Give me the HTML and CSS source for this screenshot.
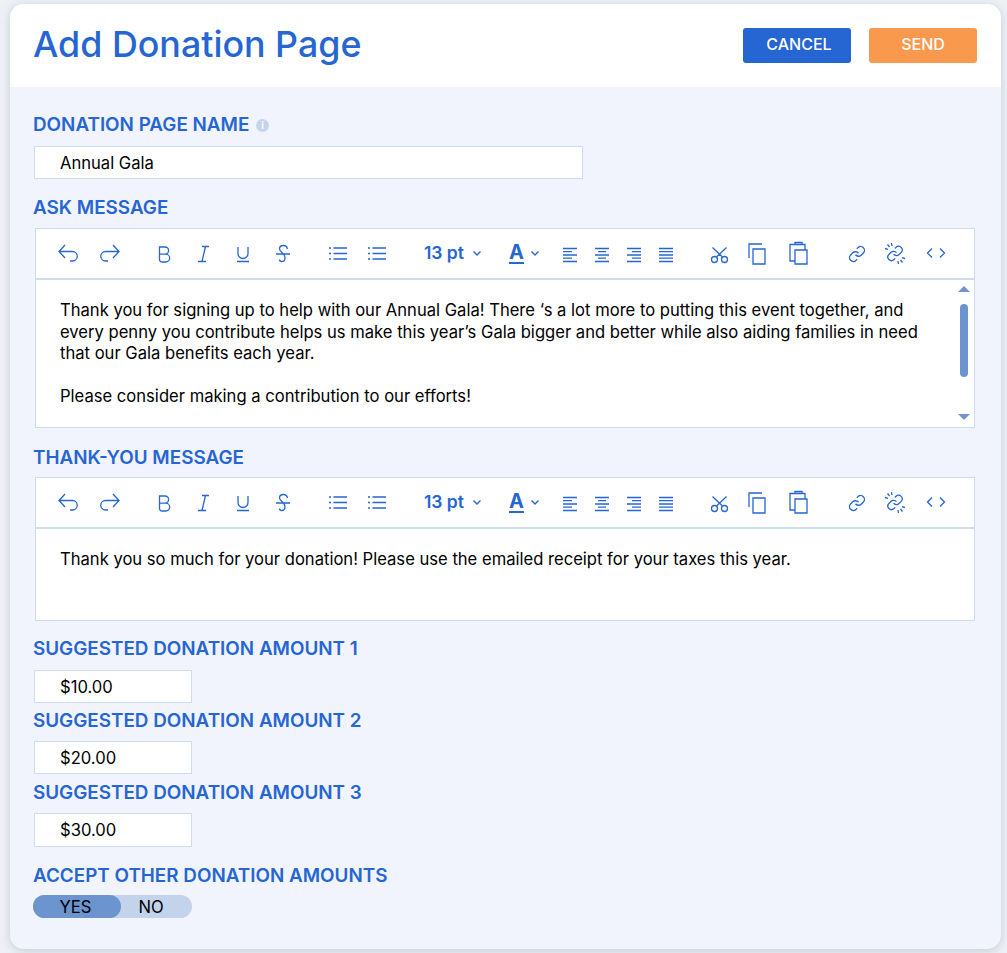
FILE: index.html
```html
<!DOCTYPE html>
<html lang="en">
<head>
  <meta charset="UTF-8" />
  <title>Add Donation Page</title>
  <link rel="stylesheet" href="styles.css">
</head>
<body>
  <svg class="sprite" aria-hidden="true">
    <symbol id="i-undo" viewBox="0 0 24 24"><path d="M9 4 3 10.5 9 17M3 10.5h13.5a4.75 4.75 0 0 1 0 9.5H14"/></symbol>
    <symbol id="i-redo" viewBox="0 0 24 24"><path d="M15 4l6 6.5-6 6.5M21 10.5H7.5a4.75 4.75 0 0 0 0 9.5H10"/></symbol>
    <symbol id="i-bold" viewBox="0 0 24 24"><path d="M7.5 6H13a3.6 3.6 0 0 1 0 7.2H7.5zM7.5 13.2h6.3a3.9 3.9 0 0 1 0 7.8H10a2.5 2.5 0 0 1-2.5-2.5z"/></symbol>
    <symbol id="i-italic" viewBox="0 0 24 24"><path d="M11 5.5h7M7 20.5h8M14.5 5.5 11 20.5"/></symbol>
    <symbol id="i-underline" viewBox="0 0 24 24"><path d="M7 6v6.5a5 5 0 0 0 10 0V6M6 20.5h12"/></symbol>
    <symbol id="i-strike" viewBox="0 0 24 24"><path d="M17.5 8C17 5.5 15.5 4.5 13.5 4.5 11 4.5 9.5 6 9.5 8c0 3 5.5 4.5 5.5 8.5 0 2.5-1.5 4-3 4s-2.5-1-2.5-2M6 13h14"/></symbol>
    <symbol id="i-list" viewBox="0 0 24 24"><path d="M7.5 7H21M7.5 12.5H21M7.5 18H21M3 7h2M3 12.5h2M3 18h2"/></symbol>
    <symbol id="i-chevron" viewBox="0 0 10 10"><path d="M1.5 3.5 5 7l3.5-3.5"/></symbol>
    <symbol id="i-left" viewBox="0 0 24 24"><path d="M5 7.5h14M5 10.7h9M5 14h14M5 17.2h9M5 20.5h14"/></symbol>
    <symbol id="i-center" viewBox="0 0 24 24"><path d="M5 7.5h14M8 10.7h8M5 14h14M8 17.2h8M5 20.5h14"/></symbol>
    <symbol id="i-right" viewBox="0 0 24 24"><path d="M5 7.5h14M10 10.7h9M5 14h14M10 17.2h9M5 20.5h14"/></symbol>
    <symbol id="i-justify" viewBox="0 0 24 24"><path d="M5 7.5h14M5 10.7h14M5 14h14M5 17.2h14M5 20.5h14"/></symbol>
    <symbol id="i-cut" viewBox="0 0 24 24"><circle cx="7.5" cy="18.5" r="3"/><circle cx="17.5" cy="18.5" r="3"/><path d="M9.5 16 19.5 6.5M15.5 16 5.5 6.5"/></symbol>
    <symbol id="i-copy" viewBox="0 0 24 24"><path d="M3 17V3h13M7 8h12v15H7z"/></symbol>
    <symbol id="i-paste" viewBox="0 0 24 24"><path d="M9 20H4V3.5h15V9M9 3.5v-2h7v2M9 9h12v14H9z"/></symbol>
    <symbol id="i-link" viewBox="0 0 24 24"><g class="chain" transform="translate(3 4) scale(.75)"><path d="M10 13a5 5 0 0 0 7.54.54l3-3a5 5 0 0 0-7.07-7.07l-1.72 1.71M14 11a5 5 0 0 0-7.54-.54l-3 3a5 5 0 0 0 7.07 7.07l1.71-1.71"/></g></symbol>
    <symbol id="i-unlink" viewBox="0 0 24 24"><g class="chain" transform="translate(2.4 3.8) scale(.72)"><path d="M10 13a5 5 0 0 0 7.54.54l3-3a5 5 0 0 0-7.07-7.07l-1.72 1.71M14 11a5 5 0 0 0-7.54-.54l-3 3a5 5 0 0 0 7.07 7.07l1.71-1.71"/></g><path d="M1 7.5l3 .8M3.5 3.5l2 2.5M7.5 2l.5 3M21 17.5l-3-.8M18.5 21.5l-2-2.5M14.5 23l-.5-3"/></symbol>
    <symbol id="i-code" viewBox="0 0 24 24"><path d="M8 7.5 3.5 12 8 16.5M16 7.5l4.5 4.5-4.5 4.5"/></symbol>
  </svg>

  <div class="card">
    <header class="card-head">
      <h1>Add Donation Page</h1>
      <div class="actions">
        <button class="btn btn-cancel">CANCEL</button>
        <button class="btn btn-send">SEND</button>
      </div>
    </header>

    <main class="card-body">
      <label class="field-label first">DONATION PAGE NAME <span class="info">i</span></label>
      <div class="input input-wide">Annual Gala</div>

      <label class="field-label ask">ASK MESSAGE</label>
      <div class="editor">
        <div class="toolbar">
          <div class="tools g-history">
            <svg class="ico"><use href="#i-undo"/></svg>
            <svg class="ico"><use href="#i-redo"/></svg>
          </div>
          <div class="tools g-format">
            <svg class="ico"><use href="#i-bold"/></svg>
            <svg class="ico"><use href="#i-italic"/></svg>
            <svg class="ico"><use href="#i-underline"/></svg>
            <svg class="ico"><use href="#i-strike"/></svg>
          </div>
          <div class="tools g-lists">
            <svg class="ico"><use href="#i-list"/></svg>
            <svg class="ico"><use href="#i-list"/></svg>
          </div>
          <div class="size">13 pt <svg class="chev"><use href="#i-chevron"/></svg></div>
          <div class="color"><span class="color-a">A</span><svg class="chev"><use href="#i-chevron"/></svg></div>
          <div class="tools g-align">
            <svg class="ico"><use href="#i-left"/></svg>
            <svg class="ico"><use href="#i-center"/></svg>
            <svg class="ico"><use href="#i-right"/></svg>
            <svg class="ico"><use href="#i-justify"/></svg>
          </div>
          <div class="tools g-clip">
            <svg class="ico"><use href="#i-cut"/></svg>
            <svg class="ico"><use href="#i-copy"/></svg>
            <svg class="ico"><use href="#i-paste"/></svg>
          </div>
          <div class="tools g-link">
            <svg class="ico"><use href="#i-link"/></svg>
            <svg class="ico"><use href="#i-unlink"/></svg>
            <svg class="ico"><use href="#i-code"/></svg>
          </div>
        </div>
        <div class="editor-body ask-body">
          <div class="editor-text">
            <p>Thank you for signing up to help with our Annual Gala! There ‘s a lot more to putting this event together, and every penny you contribute helps us make this year’s Gala bigger and better while also aiding families in need that our Gala benefits each year.</p>
            <p>Please consider making a contribution to our efforts!</p>
          </div>
          <div class="scroller">
            <span class="arrow up"></span>
            <span class="thumb"></span>
            <span class="arrow down"></span>
          </div>
        </div>
      </div>

      <label class="field-label thanks">THANK-YOU MESSAGE</label>
      <div class="editor">
        <div class="toolbar">
          <div class="tools g-history">
            <svg class="ico"><use href="#i-undo"/></svg>
            <svg class="ico"><use href="#i-redo"/></svg>
          </div>
          <div class="tools g-format">
            <svg class="ico"><use href="#i-bold"/></svg>
            <svg class="ico"><use href="#i-italic"/></svg>
            <svg class="ico"><use href="#i-underline"/></svg>
            <svg class="ico"><use href="#i-strike"/></svg>
          </div>
          <div class="tools g-lists">
            <svg class="ico"><use href="#i-list"/></svg>
            <svg class="ico"><use href="#i-list"/></svg>
          </div>
          <div class="size">13 pt <svg class="chev"><use href="#i-chevron"/></svg></div>
          <div class="color"><span class="color-a">A</span><svg class="chev"><use href="#i-chevron"/></svg></div>
          <div class="tools g-align">
            <svg class="ico"><use href="#i-left"/></svg>
            <svg class="ico"><use href="#i-center"/></svg>
            <svg class="ico"><use href="#i-right"/></svg>
            <svg class="ico"><use href="#i-justify"/></svg>
          </div>
          <div class="tools g-clip">
            <svg class="ico"><use href="#i-cut"/></svg>
            <svg class="ico"><use href="#i-copy"/></svg>
            <svg class="ico"><use href="#i-paste"/></svg>
          </div>
          <div class="tools g-link">
            <svg class="ico"><use href="#i-link"/></svg>
            <svg class="ico"><use href="#i-unlink"/></svg>
            <svg class="ico"><use href="#i-code"/></svg>
          </div>
        </div>
        <div class="editor-body thanks-body">
          <div class="editor-text">
            <p>Thank you so much for your donation! Please use the emailed receipt for your taxes this year.</p>
          </div>
        </div>
      </div>

      <label class="field-label amount-1">SUGGESTED DONATION AMOUNT 1</label>
      <div class="input input-small">$10.00</div>
      <label class="field-label amount-n">SUGGESTED DONATION AMOUNT 2</label>
      <div class="input input-small tight">$20.00</div>
      <label class="field-label amount-3">SUGGESTED DONATION AMOUNT 3</label>
      <div class="input input-small tight input-last">$30.00</div>

      <label class="field-label accept">ACCEPT OTHER DONATION AMOUNTS</label>
      <div class="toggle">
        <span class="toggle-yes">YES</span>
        <span class="toggle-no">NO</span>
      </div>
    </main>
  </div>
</body>
</html>
```

FILE: styles.css
```css
html, body {
  height: 953px;
  overflow: hidden;
}
body {
  margin: 0;
  padding: 4px 6px 4px 10px;
  box-sizing: border-box;
  background-color: #eef0f5;
  font-family: Inter, "Liberation Sans", sans-serif;
  color: #000;
}
.sprite {
  display: none;
}
.card {
  height: 945px;
  border-radius: 14px;
  overflow: hidden;
  background-color: #f1f4fc;
  box-shadow: 0 2px 10px rgba(120, 140, 160, 0.35);
}
.card-head {
  height: 83px;
  background-color: #fff;
  display: flex;
  align-items: flex-start;
  justify-content: space-between;
  padding: 0 24px;
}
h1 {
  margin: 17px 0 0 -1px;
  font-size: 35.8px;
  line-height: 46px;
  font-weight: 500;
  color: #2666d2;
}
.actions {
  display: flex;
  gap: 18px;
  margin-top: 24px;
}
.btn {
  width: 108px;
  height: 35px;
  padding: 0 0 4px;
  border: none;
  border-radius: 3px;
  color: #fff;
  font-family: inherit;
  font-size: 16px;
  font-weight: 500;
}
.btn-cancel {
  padding-left: 4px;
  background-color: #2666d2;
}
.btn-send {
  background-color: #f9994e;
}
.card-body {
  padding: 0 26px 0 24px;
}
.field-label {
  display: block;
  margin-left: -1px;
  font-size: 18.85px;
  line-height: 24px;
  font-weight: 600;
  color: #2666d2;
}
.first {
  padding-top: 26px;
}
.ask {
  padding-top: 17px;
  margin-bottom: 8px;
}
.thanks {
  padding-top: 18px;
  margin-bottom: 7px;
}
.amount-1 {
  padding-top: 16px;
}
.amount-n {
  padding-top: 6px;
}
.amount-3 {
  padding-top: 7px;
}
.accept {
  padding-top: 17px;
}
.info {
  display: inline-block;
  width: 13px;
  height: 13px;
  margin-left: 2px;
  border-radius: 50%;
  background-color: #c5d4ec;
  color: #fff;
  font-size: 10px;
  line-height: 13px;
  text-align: center;
  vertical-align: 2px;
}
.input {
  box-sizing: border-box;
  height: 33px;
  margin-top: 9px;
  padding-left: 25px;
  background-color: #fff;
  border: 1px solid #cfdcf0;
  font-size: 16.6px;
  line-height: 33px;
}
.tight {
  margin-top: 8px;
}
.input-last {
  height: 34px;
}
.input-wide {
  width: 549px;
}
.input-small {
  width: 158px;
}
.editor {
  width: 940px;
  margin-left: 1px;
  box-sizing: border-box;
  background-color: #fff;
  border: 1px solid #cfdcf0;
}
.toolbar {
  height: 51px;
  box-sizing: border-box;
  display: flex;
  align-items: center;
  padding: 0 0 2px 20px;
  border-bottom: 2px solid #cfdcf0;
}
.tools {
  display: flex;
}
.ico {
  width: 24px;
  height: 24px;
  flex: none;
  fill: none;
  stroke: #2666d2;
  stroke-width: 1.3;
}
.chain {
  stroke-width: 1.8;
}
.chev {
  width: 10px;
  height: 10px;
  fill: none;
  stroke: #2666d2;
  stroke-width: 1.4;
}
.g-history {
  gap: 18px;
}
.g-format {
  gap: 15.3px;
  margin-left: 30px;
}
.g-lists {
  gap: 15px;
  margin-left: 32px;
}
.size {
  width: 60px;
  margin-left: 35px;
  display: flex;
  align-items: center;
  gap: 8px;
  font-size: 17.5px;
  font-weight: 600;
  color: #2666d2;
}
.color {
  margin-left: 25px;
  width: 32px;
  display: flex;
  align-items: center;
  gap: 6px;
}
.color-a {
  font-size: 20px;
  line-height: 20px;
  font-weight: 700;
  color: #2666d2;
  border-bottom: 2px solid #2666d2;
}
.g-align {
  gap: 8px;
  margin-left: 17px;
}
.g-clip {
  gap: 15.5px;
  margin-left: 29px;
}
.g-link {
  gap: 15.5px;
  margin-left: 35px;
}
.editor-body {
  display: flex;
  font-size: 16.6px;
  line-height: 21.5px;
}
.ask-body {
  height: 147px;
}
.thanks-body {
  height: 91px;
}
.editor-text {
  flex: 1;
  padding: 20px 0 0 24px;
}
.editor-text p {
  margin: 0 0 21.5px;
}
.ask-body .editor-text {
  padding-right: 24px;
}
.scroller {
  width: 20px;
  padding: 6px 0 7px;
  display: flex;
  flex-direction: column;
  align-items: center;
}
.thumb {
  width: 8px;
  height: 73px;
  margin: 12px 0 auto;
  border-radius: 4px;
  background-color: #6c94cf;
}
.arrow {
  width: 0;
  height: 0;
  border-left: 6px solid transparent;
  border-right: 6px solid transparent;
}
.up {
  border-bottom: 6px solid #6c94cf;
}
.down {
  border-top: 6px solid #6c94cf;
}
.toggle {
  width: 159px;
  height: 23px;
  margin: 7px 0 0 -1px;
  display: flex;
  border-radius: 12px;
  background-color: #c4d3ec;
  font-size: 16.6px;
  line-height: 24px;
  text-align: center;
}
.toggle-yes {
  width: 85px;
  padding-right: 3px;
  border-radius: 12px;
  background-color: #6c94cf;
}
.toggle-no {
  width: 60px;
}
```
